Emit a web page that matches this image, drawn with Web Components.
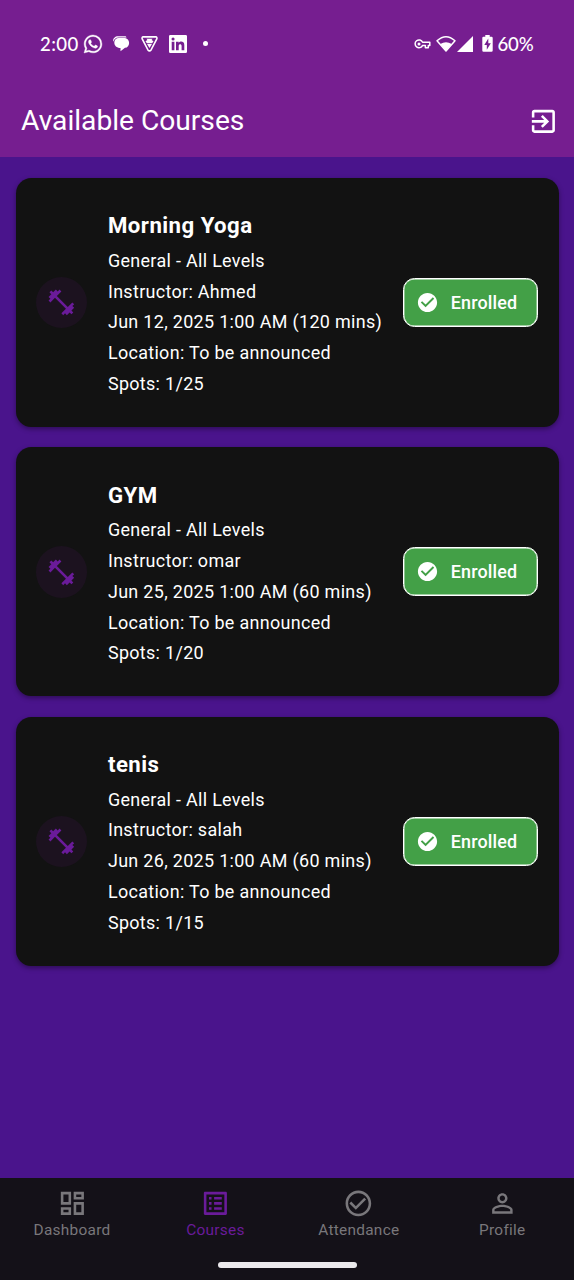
<!DOCTYPE html>
<html lang="en">
<head>
<meta charset="utf-8">
<title>Available Courses</title>
<style>
html,body{margin:0;height:100%}
body{font-family:Roboto,"Liberation Sans",sans-serif;color:#fff;background:#4a148c;overflow:hidden}
</style>
</head>
<body>
<course-app></course-app>
<script>
const define = (name, markup) => customElements.define(name, class extends HTMLElement {
  constructor() {
    super();
    this.attachShadow({mode: 'open'}).innerHTML = '<style>svg{display:block;fill:currentColor;overflow:visible}</style>' + markup(this);
  }
});

const icons = {
  exit: 'M10.09 15.59L11.5 17l5-5-5-5-1.41 1.41L12.67 11H3v2h9.67l-2.58 2.59zM19 3H5c-1.11 0-2 .9-2 2v4h2V5h14v14H5v-4H3v4c0 1.1.89 2 2 2h14c1.1 0 2-.9 2-2V5c0-1.1-.9-2-2-2z',
  fitness: 'M20.57 14.86L22 13.43 20.57 12 17 15.57 8.43 7 12 3.43 10.57 2 9.14 3.43 7.71 2 5.57 4.14 4.14 2.71 2.71 4.14l1.43 1.43L2 7.71l1.43 1.43L2 10.57 3.43 12 7 8.43 15.57 17 12 20.57 13.43 22l1.43-1.43L16.29 22l2.14-2.14 1.43 1.43 1.43-1.43-1.43-1.43L22 16.29z',
  check: 'M12 2C6.48 2 2 6.48 2 12s4.48 10 10 10 10-4.48 10-10S17.52 2 12 2zm-2 15l-5-5 1.41-1.41L10 14.17l7.59-7.59L19 8l-9 9z',
  dashboard: 'M19 5v2h-4V5h4M9 5v6H5V5h4m10 8v6h-4v-6h4M9 17v2H5v-2h4M21 3h-8v6h8V3zM11 3H3v10h8V3zm10 8h-8v10h8V11zm-10 4H3v6h8v-6z',
  courses: 'M19 5v14H5V5h14m1.1-2H3.9c-.5 0-.9.4-.9.9v16.2c0 .4.4.9.9.9h16.2c.4 0 .9-.5.9-.9V3.9c0-.5-.5-.9-.9-.9zM11 7h6v2h-6V7zm0 4h6v2h-6v-2zm0 4h6v2h-6zM7 7h2v2H7zm0 4h2v2H7zm0 4h2v2H7z',
  attendance: 'M16.59 7.58L10 14.17l-3.59-3.58L5 12l5 5 8-8zM12 2C6.48 2 2 6.48 2 12s4.48 10 10 10 10-4.48 10-10S17.52 2 12 2zm0 18c-4.42 0-8-3.58-8-8s3.58-8 8-8 8 3.58 8 8-3.58 8-8 8z',
  profile: 'M12 5.9c1.16 0 2.1.94 2.1 2.1s-.94 2.1-2.1 2.1S9.9 9.16 9.9 8s.94-2.1 2.1-2.1m0 9c2.97 0 6.1 1.46 6.1 2.1v1.1H5.9V17c0-.64 3.13-2.1 6.1-2.1M12 4C9.79 4 8 5.79 8 8s1.79 4 4 4 4-1.79 4-4-1.79-4-4-4zm0 9c-2.67 0-8 1.34-8 4v3h16v-3c0-2.66-5.33-4-8-4z'
};

define('app-icon', el => `<style>:host{display:block;flex:none;width:30.75px;height:30.75px}svg{width:100%;height:100%}</style>
<svg viewBox="0 0 24 24"><path d="${icons[el.getAttribute('name')]}"/></svg>`);

define('status-bar', () => `<style>
:host{display:flex;align-items:center;justify-content:space-between;height:87px;padding:0 40.500px 0 40px;box-sizing:border-box;font:500 18.6px Lato,sans-serif}
div{display:flex;align-items:center}
.time{width:44px;letter-spacing:.4px}
.pct{margin-left:5px;letter-spacing:-.2px}
</style>
<div>
<span class="time">2:00</span>
<svg width="18" height="18" viewBox="0 0 24 24"><path d="M17.47 14.38c-.3-.15-1.76-.87-2.03-.97-.27-.1-.47-.15-.67.15-.2.3-.77.97-.94 1.16-.17.2-.35.22-.64.08-.3-.15-1.26-.46-2.39-1.48-.88-.79-1.48-1.76-1.65-2.06-.17-.3-.02-.46.13-.61.13-.13.3-.35.45-.52.15-.17.2-.3.3-.5.1-.2.05-.37-.03-.52-.07-.15-.67-1.61-.91-2.21-.24-.58-.49-.5-.67-.51-.17-.01-.37-.01-.57-.01s-.52.07-.79.37c-.27.3-1.04 1.02-1.04 2.48s1.07 2.88 1.21 3.07c.15.2 2.1 3.2 5.08 4.49.71.31 1.26.49 1.69.63.71.23 1.36.19 1.87.12.57-.09 1.76-.72 2.01-1.41.25-.69.25-1.29.17-1.41-.07-.12-.27-.2-.57-.34M12.05 21.79a9.87 9.87 0 0 1-5.03-1.38l-.36-.21-3.74.98 1-3.65-.24-.37a9.86 9.86 0 0 1-1.51-5.26C2.17 6.44 6.6 2.01 12.05 2.01a9.83 9.83 0 0 1 9.89 9.89c0 5.45-4.44 9.89-9.89 9.89M20.46 3.49A11.82 11.82 0 0 0 12.05 0C5.5 0 .16 5.33.16 11.89c0 2.1.55 4.14 1.59 5.95L.06 24l6.3-1.65a11.9 11.9 0 0 0 5.69 1.45c6.55 0 11.89-5.34 11.89-11.9a11.82 11.82 0 0 0-3.48-8.41" stroke="currentColor" stroke-width=".5"/></svg>
<svg style="margin-left:11px" width="16" height="15" viewBox="0 0 16 15"><path d="M0 5.300C0 2.200 2.200.2 5 .2h7c.8 0 1.300.5 1.500 1.200H5.400C2.700 1.400 1.100 3 .3 5.600z"/><path d="M5.800 2h4.900c3.200 0 5.400 2 5.400 4.900 0 2.700-1.500 4.600-4.100 4.900L7.500 15.200v-3.100C3.600 11.900 1.300 9.600 1.300 6.500 1.300 3.800 3.200 2 5.800 2z"/></svg>
<svg style="margin-left:12px" width="17" height="16" viewBox="0 0 17 16"><path d="M2.200.9h12.600q1.600.2 1 2L10.100 13.900q-1.600 2-3.200 0L1.200 2.900q-.6-1.800 1-2z" fill="none" stroke="currentColor" stroke-width="1.600"/><path d="M5.500 2.700h6l-.9 1.300 1.900 1.200-1.200 1.900H5.700L4.500 5.200 6.400 4zM5.900 7.700h5.200L8.500 12z"/></svg>
<svg style="margin-left:11px" width="18" height="18" viewBox="0 0 18 18"><path fill-rule="evenodd" d="M1.300 0h15.400Q18 0 18 1.300v15.400q0 1.300-1.300 1.300H1.300Q0 18 0 16.700V1.300Q0 0 1.300 0zM2.700 6.800v8.500h2.700V6.800zM4.050 2.500a1.550 1.550 0 1 0 0 3.100 1.550 1.550 0 0 0 0-3.100zM7 6.800v8.500h2.700v-4.400c0-2.300 2.900-2.400 2.900 0v4.400h2.700V10c0-4-4.300-4.200-5.600-2V6.800z"/></svg>
<svg style="margin-left:16px" width="5" height="5" viewBox="0 0 5 5"><circle cx="2.500" cy="2.500" r="2.500"/></svg>
</div>
<div>
<svg width="17" height="10" viewBox="0 0 17 10"><path d="M8.600 3.300h7.200v3.100h-1.500v2.300h-2.900V6.400H8.600A3.900 3.900 0 1 1 8.600 3.300z" fill="none" stroke="currentColor" stroke-width="1.500" stroke-linejoin="round"/><circle cx="5" cy="4.900" r="1.500"/></svg>
<svg style="margin-left:5px" width="20" height="16" viewBox="0 0 20 16"><path d="M1 4.800Q10-3.200 19 4.800L10 15z" fill="none" stroke="currentColor" stroke-width="1.500" stroke-linejoin="round"/><path d="M4.300 8q5.700-3.700 11.400 0L10 15z"/></svg>
<svg style="margin-left:1px" width="16" height="16" viewBox="0 0 16 16"><path d="M16 0v16H0z"/></svg>
<svg style="margin-left:9px" width="11" height="17" viewBox="0 0 11 17"><path fill-rule="evenodd" d="M3.300 0h4.400v1.800h1.800q1.200 0 1.200 1.200v12.600q0 1.200-1.200 1.200h-8Q.3 16.800.3 15.600V3q0-1.200 1.200-1.200h1.800zM6.300 3.600L2.300 10h2.500v4.800l4-6.500H6.300z"/></svg>
<span class="pct">60%</span>
</div>`);

define('app-header', () => `<style>
:host{display:block;height:157px;background:#761e90}
.bar{display:flex;align-items:center;justify-content:space-between;height:68px;padding:0 15.500px 0 21px}
h1{margin:0;font-weight:400;font-size:28.2px;line-height:36px;letter-spacing:-.02px}
</style><status-bar></status-bar><div class="bar"><h1><slot></slot></h1><app-icon name="exit"></app-icon></div>`);

define('enrolled-button', () => `<style>
:host{display:flex;align-items:center;box-sizing:border-box;width:135.600px;height:49px;flex:none;border:1px solid #fff;box-shadow:inset 0 0 0 .4px #fff;border-radius:11.500px;background:#43a047;padding-left:12px;font-weight:500;font-size:17.950px;letter-spacing:.13px}
app-icon{width:23px;height:23px;margin-right:12px}
</style><app-icon name="check"></app-icon><slot></slot>`);

define('course-card', el => `<style>
:host{display:flex;align-items:center;box-sizing:border-box;height:248.900px;padding:0 20.600px 0 20.500px;background:#121212;border-radius:15.400px;box-shadow:0 2px 5px rgba(0,0,0,.38)}
.badge{display:flex;align-items:center;justify-content:center;width:51.250px;height:51.250px;border-radius:50%;background:#1c121f;color:#6a1b9a;flex:none}
.info{flex:1;margin-left:20.700px;padding-top:5.200px;white-space:nowrap;font-size:17.950px}
h2{margin:0 0 5.400px;font-weight:700;font-size:22.200px;line-height:30px;letter-spacing:.46px}
p{margin:0;line-height:30.800px;letter-spacing:.32px}
</style>
<div class="badge"><app-icon name="fitness"></app-icon></div>
<div class="info"><h2>${el.getAttribute('name')}</h2><p>General - All Levels</p><p>Instructor: ${el.getAttribute('instructor')}</p><p>${el.getAttribute('time')}</p><p>Location: To be announced</p><p>Spots: ${el.getAttribute('spots')}</p></div>
<enrolled-button>Enrolled</enrolled-button>`);

define('nav-item', el => `<style>
:host{display:flex;flex:1;flex-direction:column;align-items:center;color:#79777b;font-size:15.400px;letter-spacing:.27px;line-height:20px;padding-top:10px}
:host([active]){color:#6a1b9a}
app-icon{margin-bottom:2px}
</style><app-icon name="${el.getAttribute('icon')}"></app-icon><span><slot></slot></span>`);

define('bottom-nav', () => `<style>
:host{display:flex;flex-direction:column;height:102.500px;background:#141118}
.items{display:flex;flex:1;padding-left:.3px}
.handle{width:139px;height:5.500px;border-radius:3px;background:#ebe9ec;margin:0 auto 12.500px}
</style><div class="items"><nav-item icon="dashboard">Dashboard</nav-item><nav-item icon="courses" active>Courses</nav-item><nav-item icon="attendance">Attendance</nav-item><nav-item icon="profile">Profile</nav-item></div><div class="handle"></div>`);

define('course-app', () => `<style>
:host{display:flex;flex-direction:column;height:1280px;width:574px;background:#4a148c}
main{flex:1;display:flex;flex-direction:column;gap:20.550px;padding:21px 15px 0 15.500px}
</style><app-header>Available Courses</app-header>
<main>
<course-card name="Morning Yoga" instructor="Ahmed" time="Jun 12, 2025 1:00 AM (120 mins)" spots="1/25"></course-card>
<course-card name="GYM" instructor="omar" time="Jun 25, 2025 1:00 AM (60 mins)" spots="1/20"></course-card>
<course-card name="tenis" instructor="salah" time="Jun 26, 2025 1:00 AM (60 mins)" spots="1/15"></course-card>
</main>
<bottom-nav></bottom-nav>`);
</script>
</body>
</html>
